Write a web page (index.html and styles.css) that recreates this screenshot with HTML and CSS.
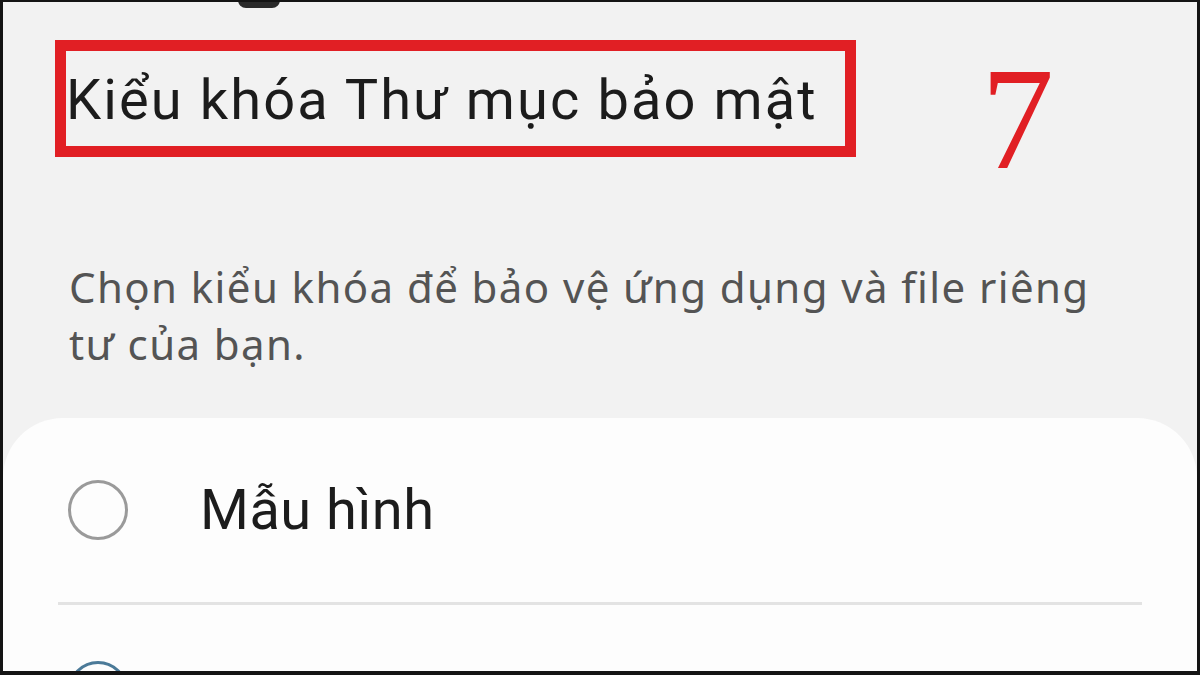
FILE: index.html
```html
<!DOCTYPE html>
<html lang="vi">
<head>
<meta charset="utf-8">
<title>Kiểu khóa Thư mục bảo mật</title>
<link rel="stylesheet" href="styles.css">
</head>
<body>
<div class="frame">
  <div class="notch"></div>
  <div class="header">
    <div class="highlight"><h1 class="title">Kiểu khóa Thư mục bảo mật</h1></div>
    <div class="step">7</div>
  </div>
  <p class="desc">Chọn kiểu khóa để bảo vệ ứng dụng và file riêng tư của bạn.</p>
  <div class="card">
    <div class="option">
      <span class="radio"></span>
      <span class="label">Mẫu hình</span>
    </div>
    <div class="divider"></div>
    <div class="option option-next">
      <span class="radio radio-active"></span>
    </div>
  </div>
</div>
</body>
</html>
```
FILE: styles.css
```css
html, body {
  margin: 0;
  padding: 0;
  width: 1200px;
  height: 675px;
  overflow: hidden;
  background: #111;
}
.frame {
  position: relative;
  box-sizing: border-box;
  width: 1200px;
  height: 675px;
  border-style: solid;
  border-color: #141414;
  border-width: 2px 3px 4px 3px;
  background: #f2f2f2;
  display: flex;
  flex-direction: column;
  overflow: hidden;
  font-family: Roboto, "Noto Sans", sans-serif;
}
.notch {
  position: absolute;
  top: -2px;
  left: 235px;
  width: 42px;
  height: 8px;
  background: #2a2a2a;
  border-radius: 0 0 8px 8px;
}
.header {
  display: flex;
  align-items: flex-start;
  height: 155px;
  margin-top: 38px;
  margin-left: 52px;
}
.highlight {
  box-sizing: border-box;
  width: 801px;
  height: 117px;
  border: 11px solid #e11f24;
  padding: 16px 0 0 0;
}
.title {
  margin: 0;
  font-weight: 400;
  font-size: 56px;
  line-height: 66px;
  letter-spacing: 2.1px;
  color: #1c1c1c;
  white-space: nowrap;
}
.step {
  margin-left: 125px;
  margin-top: 6px;
  font-family: "Liberation Serif", "Times New Roman", serif;
  font-size: 146px;
  line-height: 146px;
  color: #e11f24;
}
.desc {
  margin: 66px 0 0 66px;
  width: 1060px;
  font-family: "Noto Sans", Roboto, sans-serif;
  font-size: 42px;
  line-height: 57px;
  letter-spacing: 1.4px;
  color: #545454;
}
.card {
  flex: 1;
  margin-top: 46px;
  background: #fdfdfd;
  border-radius: 60px 60px 0 0;
  padding: 0 55px;
}
.option {
  display: flex;
  align-items: center;
  height: 184px;
}
.option-next {
  align-items: flex-start;
  padding-top: 56px;
  box-sizing: border-box;
}
.radio {
  box-sizing: border-box;
  width: 60px;
  height: 60px;
  margin-left: 10px;
  border: 3px solid #9a9a9a;
  border-radius: 50%;
  flex: none;
}
.radio-active {
  border-color: #4b7a98;
}
.label {
  margin-left: 72px;
  font-size: 56px;
  letter-spacing: 0.5px;
  color: #1c1c1c;
}
.divider {
  height: 3px;
  background: #e3e3e3;
}
```
